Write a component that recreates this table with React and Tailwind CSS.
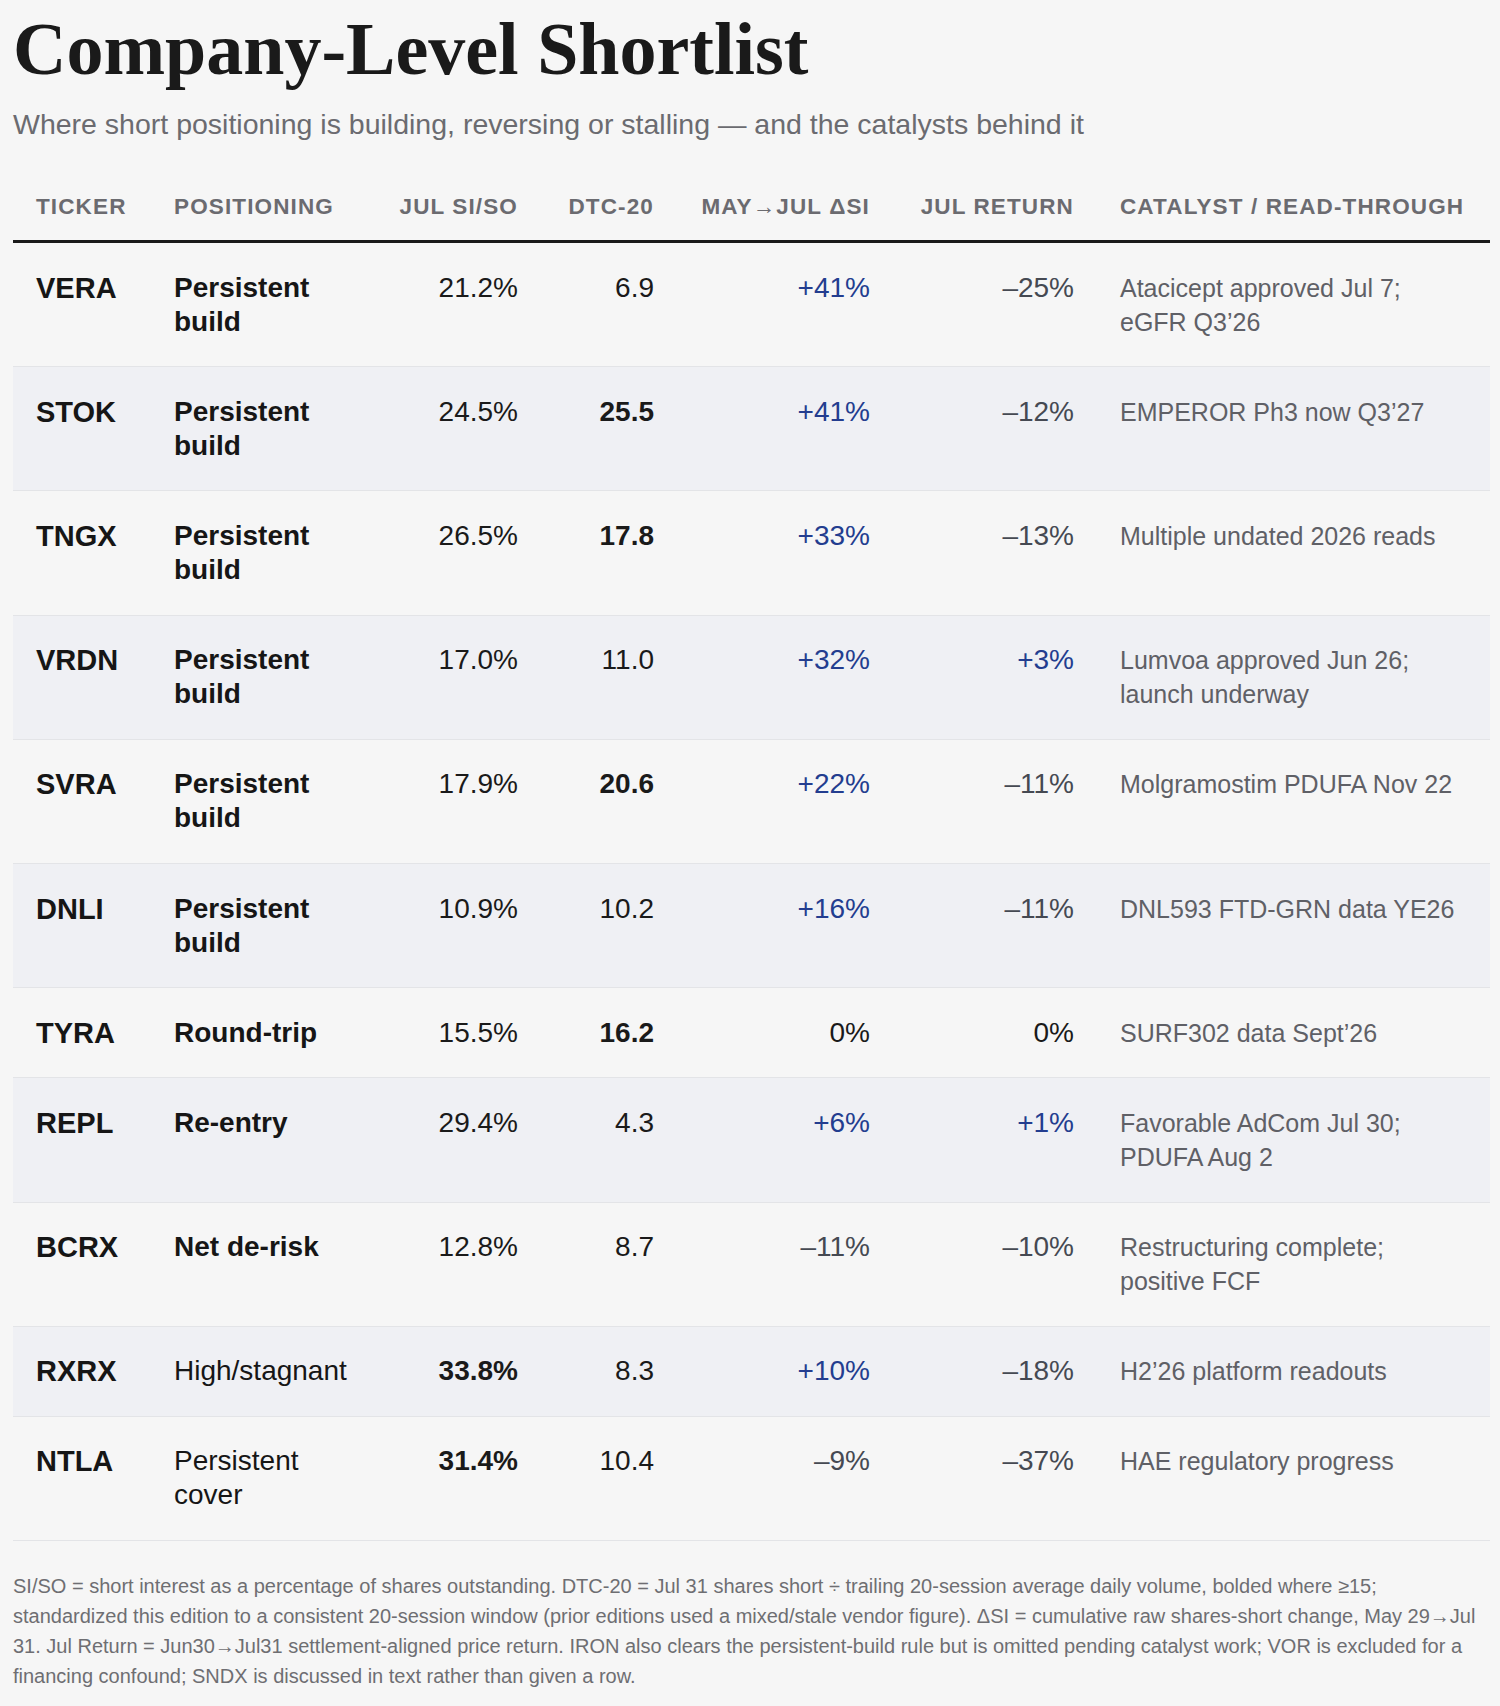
import React from 'react';

const rows = [
  { t: 'VERA', pos: 'Persistent build', posBold: true, si: '21.2%', dtc: '6.9', dsi: '+41%', ret: '–25%', cat: 'Atacicept approved Jul 7; eGFR Q3’26' },
  { t: 'STOK', pos: 'Persistent build', posBold: true, si: '24.5%', dtc: '25.5', dtcBold: true, dsi: '+41%', ret: '–12%', cat: 'EMPEROR Ph3 now Q3’27' },
  { t: 'TNGX', pos: 'Persistent build', posBold: true, si: '26.5%', dtc: '17.8', dtcBold: true, dsi: '+33%', ret: '–13%', cat: 'Multiple undated 2026 reads' },
  { t: 'VRDN', pos: 'Persistent build', posBold: true, si: '17.0%', dtc: '11.0', dsi: '+32%', ret: '+3%', cat: 'Lumvoa approved Jun 26; launch underway' },
  { t: 'SVRA', pos: 'Persistent build', posBold: true, si: '17.9%', dtc: '20.6', dtcBold: true, dsi: '+22%', ret: '–11%', cat: 'Molgramostim PDUFA Nov 22' },
  { t: 'DNLI', pos: 'Persistent build', posBold: true, si: '10.9%', dtc: '10.2', dsi: '+16%', ret: '–11%', cat: 'DNL593 FTD-GRN data YE26' },
  { t: 'TYRA', pos: 'Round-trip', posBold: true, si: '15.5%', dtc: '16.2', dtcBold: true, dsi: '0%', ret: '0%', cat: 'SURF302 data Sept’26' },
  { t: 'REPL', pos: 'Re-entry', posBold: true, si: '29.4%', dtc: '4.3', dsi: '+6%', ret: '+1%', cat: 'Favorable AdCom Jul 30; PDUFA Aug 2' },
  { t: 'BCRX', pos: 'Net de-risk', posBold: true, si: '12.8%', dtc: '8.7', dsi: '–11%', ret: '–10%', cat: 'Restructuring complete; positive FCF' },
  { t: 'RXRX', pos: 'High/stagnant', si: '33.8%', siBold: true, dtc: '8.3', dsi: '+10%', ret: '–18%', cat: 'H2’26 platform readouts' },
  { t: 'NTLA', pos: 'Persistent cover', si: '31.4%', siBold: true, dtc: '10.4', dsi: '–9%', ret: '–37%', cat: 'HAE regulatory progress' },
];

// colour for signed values
const tone = (v) => {
  if (v.startsWith('+')) return 'text-[#233d8f]';
  if (v.startsWith('–')) return 'text-[#454952]';
  return 'text-[#1a1a1a]';
};

const cols = 'grid grid-cols-[138px_236px_154px_136px_216px_204px_1fr]';

export default function App() {
  return (
    <div className="min-h-screen bg-[#f6f6f6] pl-[13px] pr-[10px] pt-[12px] pb-[16px] font-['Liberation_Sans',Arial,sans-serif]">
      {/* Title */}
      <h1 className="font-['Liberation_Serif','Times_New_Roman',serif] font-bold text-[74px] leading-none text-[#1a1a1a]">
        Company-Level Shortlist
      </h1>
      <p className="mt-[22px] text-[28.5px] leading-[32px] text-[#6b6b70]">
        Where short positioning is building, reversing or stalling — and the catalysts behind it
      </p>

      {/* Table header */}
      <div className={`${cols} mt-[53px] border-b-[3px] border-[#1a1a1a] pb-[19px] text-[22.5px] leading-[28px] font-bold uppercase tracking-[0.05em] text-[#6b6b70] whitespace-nowrap`}>
        <div className="px-[23px]">Ticker</div>
        <div className="px-[23px]">Positioning</div>
        <div className="pl-[4px] pr-[23px] text-right">Jul SI/SO</div>
        <div className="px-[23px] text-right">DTC-20</div>
        <div className="px-[23px] text-right">May→Jul ΔSI</div>
        <div className="px-[23px] text-right">Jul Return</div>
        <div className="px-[23px]">Catalyst / Read-through</div>
      </div>

      {/* Rows */}
      {rows.map((r, i) => (
        <div
          key={r.t}
          className={`${cols} border-b border-[#e3e4e7] py-[27.6px] text-[28px] leading-[34px] ${i % 2 === 1 ? 'bg-[#eff0f4]' : ''}`}
        >
          <div className="px-[23px] text-[29px] font-bold text-[#161616]">{r.t}</div>
          <div className={`px-[23px] text-[#161616] ${r.posBold ? 'font-bold' : ''}`}>{r.pos}</div>
          <div className={`pl-[4px] pr-[23px] text-right text-[#1a1a1a] ${r.siBold ? 'font-bold' : ''}`}>{r.si}</div>
          <div className={`px-[23px] text-right text-[#1a1a1a] ${r.dtcBold ? 'font-bold' : ''}`}>{r.dtc}</div>
          <div className={`px-[23px] text-right ${tone(r.dsi)}`}>{r.dsi}</div>
          <div className={`px-[23px] text-right ${tone(r.ret)}`}>{r.ret}</div>
          <div className="px-[23px] text-[25px] leading-[34px] text-[#5f6066]">{r.cat}</div>
        </div>
      ))}

      {/* Footnote */}
      <p className="mt-[30px] text-[20px] leading-[30px] text-[#6e6e72]">
        SI/SO = short interest as a percentage of shares outstanding. DTC-20 = Jul 31 shares short ÷ trailing 20-session average daily volume, bolded where ≥15; standardized this edition to a consistent 20-session window (prior editions used a mixed/stale vendor figure). ΔSI = cumulative raw shares-short change, May 29→Jul 31. Jul Return = Jun30→Jul31 settlement-aligned price return. IRON also clears the persistent-build rule but is omitted pending catalyst work; VOR is excluded for a financing confound; SNDX is discussed in text rather than given a row.
      </p>
    </div>
  );
}
